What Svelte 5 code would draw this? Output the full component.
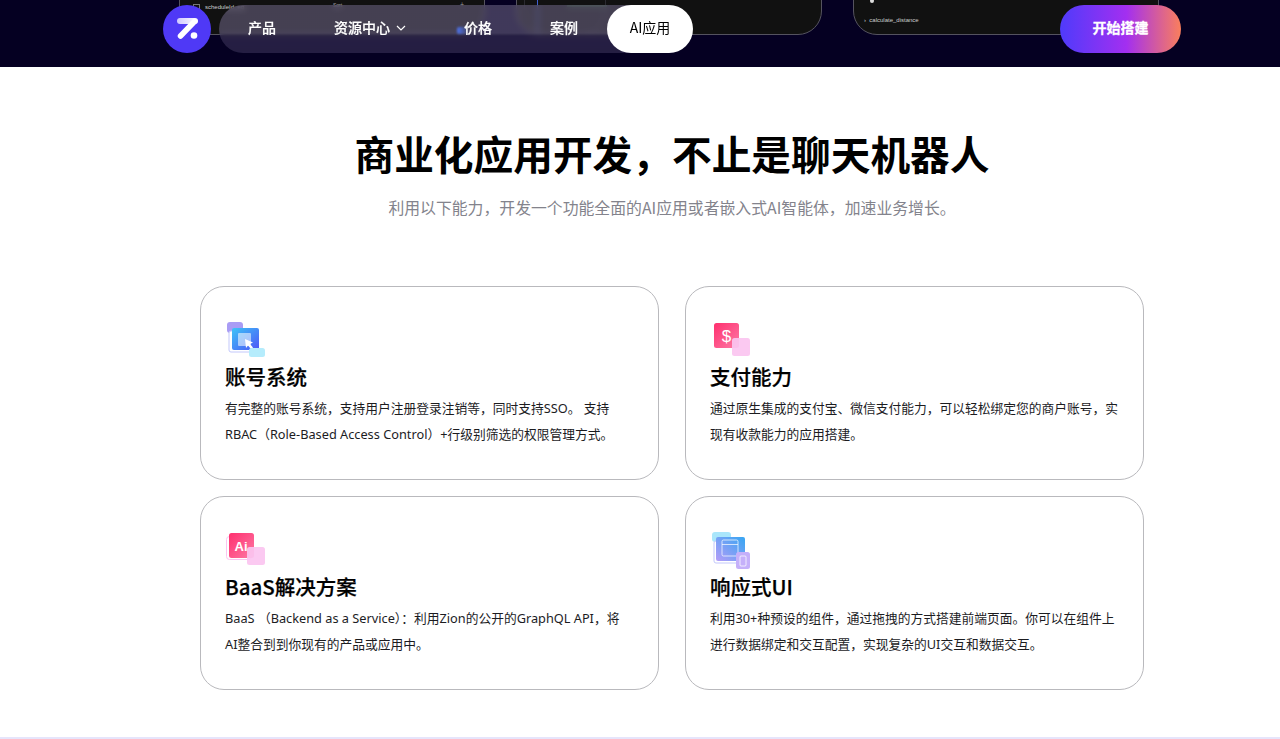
<script lang="ts">
	const links = [
		{ label: '产品', width: 86 },
		{ label: '资源中心', width: 130, caret: true },
		{ label: '价格', width: 86 },
		{ label: '案例', width: 86 }
	];

	const cards = [
		{
			icon: 'account',
			title: '账号系统',
			lines: ['有完整的账号系统，支持用户注册登录注销等，同时支持SSO。 支持', 'RBAC（Role-Based Access Control）+行级别筛选的权限管理方式。']
		},
		{
			icon: 'pay',
			title: '支付能力',
			lines: ['通过原生集成的支付宝、微信支付能力，可以轻松绑定您的商户账号，实', '现有收款能力的应用搭建。']
		},
		{
			icon: 'ai',
			title: 'BaaS解决方案',
			lines: ['BaaS （Backend as a Service）：利用Zion的公开的GraphQL API，将', 'AI整合到到你现有的产品或应用中。']
		},
		{
			icon: 'ui',
			title: '响应式UI',
			lines: ['利用30+种预设的组件，通过拖拽的方式搭建前端页面。你可以在组件上', '进行数据绑定和交互配置，实现复杂的UI交互和数据交互。']
		}
	];
</script>

<div class="page">
	<header class="hero">
		<!-- app previews scrolled almost out of view behind the nav -->
		<div class="shot shot-a">
			<span class="check"></span>
			<span class="shot-text">scheduleId_eq</span>
			<span class="shot-sort">Sort</span>
			<span class="shot-plus">+</span>
		</div>
		<div class="shot shot-b">
			<span class="shot-blue"></span>
			<span class="shot-arc"></span>
			<span class="shot-green"></span>
		</div>
		<div class="shot shot-c">
			<span class="shot-dot"></span>
			<span class="shot-text">› &nbsp;calculate_distance</span>
		</div>

		<div class="nav">
			<div class="logo">
				<svg width="26" height="26" viewBox="0 0 26 26">
					<defs>
						<linearGradient id="g-bar" x1="0" y1="0" x2="1" y2="0">
							<stop offset="0" stop-color="#cfc8ff" />
							<stop offset="1" stop-color="#fff" />
						</linearGradient>
					</defs>
					<rect x="3" y="2" width="21" height="6" rx="3" fill="url(#g-bar)" />
					<path d="M20.500 5.500 6.500 20" stroke="#fff" stroke-width="5.500" stroke-linecap="round" />
					<circle cx="20" cy="19.500" r="3.300" fill="#fff" />
				</svg>
			</div>
			<nav class="links">
				<span class="glow"></span>
				{#each links as link}
					<span class="link" style="width: {link.width}px">
						{link.label}
						{#if link.caret}
							<svg class="caret" width="10" height="6" viewBox="0 0 10 6">
								<path d="M1 1l4 4 4-4" fill="none" stroke="#fff" stroke-width="1.2" />
							</svg>
						{/if}
					</span>
				{/each}
				<span class="active">AI应用</span>
			</nav>
			<button class="start">开始搭建</button>
		</div>
	</header>

	<main class="section">
		<h1>商业化应用开发，不止是聊天机器人</h1>
		<p class="sub">利用以下能力，开发一个功能全面的AI应用或者嵌入式AI智能体，加速业务增长。</p>

		<div class="grid">
			{#each cards as card}
				<article class="card">
					<div class="icon">
						{#if card.icon === 'account'}
							<svg width="42" height="38" viewBox="0 0 42 38">
								<defs>
									<linearGradient id="g-account" x1="0" y1="0" x2="1" y2="1">
										<stop offset="0" stop-color="#3cc4f7" />
										<stop offset="1" stop-color="#4f55f7" />
									</linearGradient>
								</defs>
								<rect x="2" y="0" width="16" height="11" rx="3" fill="#a99cf5" />
								<rect x="4" y="9" width="27" height="21" rx="2" fill="#fff" stroke="#c3c8fb" stroke-width="1" />
								<rect x="7" y="6" width="27" height="22" rx="2" fill="url(#g-account)" />
								<rect x="13" y="11" width="13" height="13" rx="1" fill="#fff" opacity=".55" />
								<path d="M20 17l8 3.500-3 1.500 3 3.500-2 1.500-3-3.500-2 2.500z" fill="#fff" />
								<rect x="24" y="26" width="16" height="9" rx="2.500" fill="#b5ecfc" />
							</svg>
						{:else if card.icon === 'pay'}
							<svg width="42" height="38" viewBox="0 0 42 38">
								<defs>
									<linearGradient id="g-pay" x1="0" y1="0" x2="1" y2="1">
										<stop offset="0" stop-color="#ff2f6e" />
										<stop offset="1" stop-color="#fd7aa6" />
									</linearGradient>
								</defs>
								<rect x="4" y="1" width="25" height="25" rx="2.500" fill="url(#g-pay)" />
								<rect x="22" y="16" width="18" height="18" rx="2.500" fill="#fbc4f0" opacity=".92" />
								<text x="16.500" y="20" class="glyph">$</text>
							</svg>
						{:else if card.icon === 'ai'}
							<svg width="42" height="38" viewBox="0 0 42 38">
								<defs>
									<linearGradient id="g-ai" x1="0" y1="0" x2="1" y2="1">
										<stop offset="0" stop-color="#ff2f6e" />
										<stop offset="1" stop-color="#fd7aa6" />
									</linearGradient>
								</defs>
								<rect x="1.500" y="4.500" width="25" height="23" rx="3" fill="#fff" stroke="#fbc4f0" />
								<rect x="4" y="1" width="25" height="25" rx="2.500" fill="url(#g-ai)" />
								<rect x="22" y="15" width="18" height="18" rx="2.500" fill="#fbc4f0" opacity=".92" />
								<text x="16" y="18.500" class="glyph-ai">Ai</text>
							</svg>
						{:else}
							<svg width="42" height="38" viewBox="0 0 42 38">
								<defs>
									<linearGradient id="g-ui" x1="1" y1="0" x2="0" y2="1">
										<stop offset="0" stop-color="#35a6f2" />
										<stop offset="1" stop-color="#b49cf8" />
									</linearGradient>
								</defs>
								<rect x="2" y="0" width="19" height="10" rx="3" fill="#a9e6fb" />
								<rect x="4" y="9" width="26" height="22" rx="2" fill="#fff" stroke="#c3c8fb" />
								<rect x="6" y="5" width="29" height="24" rx="2" fill="url(#g-ui)" />
								<rect x="12" y="8" width="16" height="16" rx="1.500" fill="none" stroke="#fff" stroke-opacity=".7" />
								<path d="M12 12.500h16" stroke="#fff" stroke-opacity=".7" />
								<rect x="26" y="20" width="14" height="17" rx="2.500" fill="#c5b0fa" />
								<rect x="30" y="24" width="6" height="10" rx="1" fill="none" stroke="#fff" stroke-opacity=".75" />
							</svg>
						{/if}
					</div>
					<h2>{card.title}</h2>
					{#each card.lines as line}
						<p class="line">{line}</p>
					{/each}
				</article>
			{/each}
		</div>
	</main>
	<div class="rule"></div>
</div>

<style>
	:global(body) {
		margin: 0;
		background: #fff;
		overflow: hidden;
	}

	.page {
		height: 739px;
		display: flex;
		flex-direction: column;
		font-family: "Noto Sans CJK SC", sans-serif;
		color: #000;
	}

	.hero {
		position: relative;
		height: 67px;
		flex-shrink: 0;
		background: #050022;
		overflow: hidden;
	}

	.shot {
		position: absolute;
		top: -40px;
		height: 75px;
		box-sizing: border-box;
		background: #111;
		border: 1px solid #55535f;
		border-radius: 0 0 24px 24px;
		overflow: hidden;
	}

	.shot-a { left: 179px; width: 306px; }
	.shot-b { left: 516px; width: 306px; }
	.shot-c { left: 853px; width: 306px; }

	.shot-text {
		position: absolute;
		font-family: "Liberation Sans", sans-serif;
		font-size: 6px;
		line-height: 8px;
		color: #cfcfcf;
	}

	.shot-a .shot-text { left: 25px; top: 42px; }
	.shot-c .shot-text { left: 10px; top: 55px; }

	.check {
		position: absolute;
		left: 13px;
		top: 43px;
		width: 5px;
		height: 5px;
		border: 1px solid #777;
	}

	.shot-sort {
		position: absolute;
		left: 153px;
		top: 41px;
		font-family: "Liberation Sans", sans-serif;
		font-size: 5px;
		line-height: 7px;
		color: #aaa;
	}

	.shot-plus {
		position: absolute;
		left: 280px;
		top: 40px;
		font-family: "Liberation Sans", sans-serif;
		font-size: 7px;
		line-height: 8px;
		color: #999;
	}

	.shot-blue {
		position: absolute;
		left: 20px;
		top: 0;
		bottom: 0;
		width: 1px;
		background: #3f5fd0;
	}

	.shot-arc {
		position: absolute;
		left: 7px;
		top: 20px;
		width: 80px;
		height: 54px;
		border: 1px solid #2a2a30;
		border-radius: 0 0 30px 30px;
	}

	.shot-green {
		position: absolute;
		left: 50px;
		top: 44px;
		width: 40px;
		height: 2px;
		background: #2c5a2c;
	}

	.shot-dot {
		position: absolute;
		left: 16px;
		top: 38px;
		width: 4px;
		height: 4px;
		border-radius: 50%;
		background: #ddd;
	}

	.nav {
		position: absolute;
		left: 163px;
		top: 5px;
		width: 1018px;
		height: 48px;
		display: flex;
		align-items: center;
	}

	.logo {
		width: 48px;
		height: 48px;
		flex-shrink: 0;
		border-radius: 50%;
		background: #4f39f6;
		display: flex;
		align-items: center;
		justify-content: center;
	}

	.links {
		position: relative;
		margin-left: 8px;
		width: 473px;
		height: 48px;
		display: flex;
		align-items: center;
		border-radius: 24px;
		background:
			linear-gradient(180deg, rgba(255, 255, 255, 0.12) 0 28px, rgba(255, 255, 255, 0) 31px),
			rgba(70, 60, 100, 0.5);
		backdrop-filter: blur(3px);
	}

	.glow {
		position: absolute;
		left: 238px;
		top: 22px;
		width: 12px;
		height: 7px;
		border-radius: 2px;
		background: linear-gradient(90deg, #4d74f0, #4d74f000);
		filter: blur(1px);
	}

	.link {
		position: relative;
		display: flex;
		align-items: center;
		justify-content: center;
		gap: 6px;
		padding-bottom: 4px;
		font-size: 14px;
		font-weight: 500;
		color: #fff;
		-webkit-text-stroke: 0.2px #fff;
	}

	.caret {
		margin-top: 2px;
	}

	.active {
		position: absolute;
		left: 388px;
		top: 0;
		width: 86px;
		height: 44px;
		padding-bottom: 4px;
		border-radius: 24px;
		background: #fff;
		color: #000;
		font-size: 14px;
		display: flex;
		align-items: center;
		justify-content: center;
	}

	.start {
		margin-left: auto;
		width: 121px;
		height: 48px;
		padding: 0 0 4px;
		border: none;
		border-radius: 24px;
		background: linear-gradient(90deg, #4f3bfb 0%, #a32ff0 55%, #fa7f5c 100%);
		color: #fff;
		font-family: inherit;
		font-size: 14px;
		font-weight: 700;
		-webkit-text-stroke: 0.3px #fff;
	}

	.section {
		flex: 1;
		padding-left: 64px;
		display: flex;
		flex-direction: column;
		align-items: center;
	}

	h1 {
		margin: 58px 0 0;
		height: 56px;
		font-size: 39.7px;
		line-height: 56px;
		font-weight: 700;
	}

	.sub {
		margin: 14px 0 0;
		font-size: 15.85px;
		line-height: 26px;
		color: #83838c;
	}

	.grid {
		margin-top: 65px;
		display: grid;
		grid-template-columns: 459px 459px;
		grid-auto-rows: 194px;
		column-gap: 26px;
		row-gap: 16px;
	}

	.card {
		box-sizing: border-box;
		padding: 35px 24px 0;
		border: 1px solid #b9b9bd;
		border-radius: 24px;
	}

	.icon {
		height: 38px;
		display: flex;
	}

	.icon svg {
		display: block;
	}

	.glyph {
		font-family: "Liberation Sans", sans-serif;
		font-size: 17px;
		fill: #fff;
		text-anchor: middle;
	}

	.glyph-ai {
		font-family: "Liberation Sans", sans-serif;
		font-size: 13px;
		font-weight: 700;
		fill: #fff;
		text-anchor: middle;
	}

	h2 {
		margin: 1px 0 4px;
		font-size: 20.5px;
		line-height: 30px;
		font-weight: 500;
		-webkit-text-stroke: 0.25px #000;
	}

	.line {
		margin: 0;
		font-family: "Noto Sans", "Noto Sans CJK SC", sans-serif;
		font-size: 12.75px;
		line-height: 26px;
		color: #1c1c1f;
		white-space: nowrap;
	}

	.rule {
		height: 2px;
		flex-shrink: 0;
		background: #e6e5fb;
	}
</style>
